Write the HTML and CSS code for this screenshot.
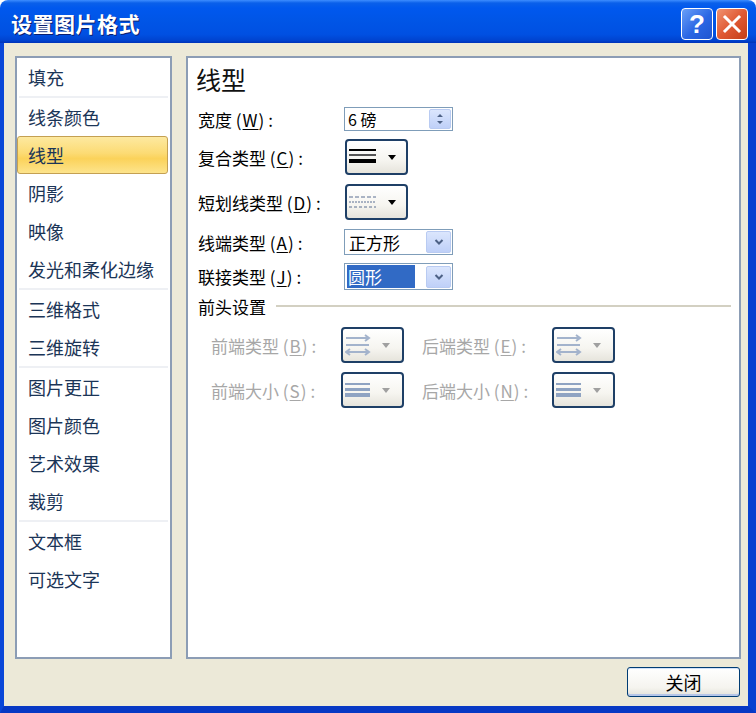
FILE: index.html
```html
<!DOCTYPE html>
<html>
<head>
  <meta charset="utf-8">
  <link rel="stylesheet" href="styles.css">
</head>
<body>
  <div class="window">
    <div class="titlebar">
      <span class="title">设置图片格式</span>
      <div class="caption-buttons">
        <span class="cap-btn cap-help">?</span>
        <span class="cap-btn cap-close">
          <svg width="20" height="20" viewBox="0 0 20 20">
            <path d="M3 3 L17 17 M17 3 L3 17" stroke="#fff" stroke-width="3" stroke-linecap="square"/>
          </svg>
        </span>
      </div>
    </div>

    <div class="frame">
      <div class="panels">
        <ul class="nav">
          <li class="nav-item">填充</li>
          <li class="nav-sep"></li>
          <li class="nav-item">线条颜色</li>
          <li class="nav-item selected">线型</li>
          <li class="nav-item">阴影</li>
          <li class="nav-item">映像</li>
          <li class="nav-item">发光和柔化边缘</li>
          <li class="nav-sep"></li>
          <li class="nav-item">三维格式</li>
          <li class="nav-item">三维旋转</li>
          <li class="nav-sep"></li>
          <li class="nav-item">图片更正</li>
          <li class="nav-item">图片颜色</li>
          <li class="nav-item">艺术效果</li>
          <li class="nav-item">裁剪</li>
          <li class="nav-sep"></li>
          <li class="nav-item">文本框</li>
          <li class="nav-item">可选文字</li>
        </ul>

        <div class="pane">
          <div class="pane-title">线型</div>

          <div class="row row-width">
            <span class="label">宽度 <span class="key">(<u>W</u>)</span>:</span>
            <div class="spinner">
              <span class="spinner-value">6 磅</span>
              <span class="spin-btn">
                <svg width="10" height="14" viewBox="0 0 10 14">
                  <path d="M2 5 L5 2 L8 5 Z M2 9 L5 12 L8 9 Z" fill="#4d6185"/>
                </svg>
              </span>
            </div>
          </div>

          <div class="row row-tall">
            <span class="label">复合类型 <span class="key">(<u>C</u>)</span>:</span>
            <span class="drop-btn">
              <svg width="28" height="18" viewBox="0 0 28 18">
                <rect x="0" y="1" width="27" height="2" fill="#000"/>
                <rect x="0" y="6" width="27" height="2" fill="#555"/>
                <rect x="0" y="11" width="27" height="4" fill="#000"/>
              </svg>
              <span class="tri"></span>
            </span>
          </div>

          <div class="row row-tall">
            <span class="label">短划线类型 <span class="key">(<u>D</u>)</span>:</span>
            <span class="drop-btn">
              <svg width="28" height="18" viewBox="0 0 28 18">
                <path d="M0 4 H27" stroke="#5a6f92" stroke-width="1" stroke-dasharray="4 2"/>
                <path d="M0 9 H27" stroke="#5a6f92" stroke-width="1" stroke-dasharray="2 1"/>
                <path d="M0 14 H27" stroke="#5a6f92" stroke-width="1" stroke-dasharray="3 2"/>
              </svg>
              <span class="tri"></span>
            </span>
          </div>

          <div class="row row-combo">
            <span class="label">线端类型 <span class="key">(<u>A</u>)</span>:</span>
            <div class="combo">
              <span class="combo-value">正方形</span>
              <span class="combo-btn">
                <svg width="10" height="8" viewBox="0 0 10 8">
                  <path d="M1.5 2 L5 5.5 L8.5 2" stroke="#4d6185" stroke-width="2" fill="none"/>
                </svg>
              </span>
            </div>
          </div>

          <div class="row row-combo row-join">
            <span class="label">联接类型 <span class="key">(<u>J</u>)</span>:</span>
            <div class="combo">
              <span class="combo-value selected-text">圆形</span>
              <span class="combo-btn">
                <svg width="10" height="8" viewBox="0 0 10 8">
                  <path d="M1.5 2 L5 5.5 L8.5 2" stroke="#4d6185" stroke-width="2" fill="none"/>
                </svg>
              </span>
            </div>
          </div>

          <div class="group-head">
            <span class="group-title">前头设置</span>
            <span class="group-line"></span>
          </div>

          <div class="row row-tall row-arrow first">
            <span class="label label-off">前端类型 <span class="key">(<u>B</u>)</span>:</span>
            <span class="drop-btn disabled">
              <svg width="26" height="24" viewBox="0 0 26 24">
                <path d="M1 5 H24 M20 2 L24 5 L20 8" stroke="#a3b3cc" stroke-width="2" fill="none"/>
                <path d="M1 12 H24" stroke="#a3b3cc" stroke-width="2"/>
                <path d="M1 19 H24 M5 16 L1 19 L5 22 M20 16 L24 19 L20 22" stroke="#a3b3cc" stroke-width="2" fill="none"/>
              </svg>
              <span class="tri"></span>
            </span>
            <span class="label label-off label-second">后端类型 <span class="key">(<u>E</u>)</span>:</span>
            <span class="drop-btn disabled">
              <svg width="26" height="24" viewBox="0 0 26 24">
                <path d="M1 5 H24 M20 2 L24 5 L20 8" stroke="#a3b3cc" stroke-width="2" fill="none"/>
                <path d="M1 12 H24" stroke="#a3b3cc" stroke-width="2"/>
                <path d="M1 19 H24 M5 16 L1 19 L5 22 M20 16 L24 19 L20 22" stroke="#a3b3cc" stroke-width="2" fill="none"/>
              </svg>
              <span class="tri"></span>
            </span>
          </div>

          <div class="row row-tall row-arrow">
            <span class="label label-off">前端大小 <span class="key">(<u>S</u>)</span>:</span>
            <span class="drop-btn disabled">
              <svg width="26" height="16" viewBox="0 0 26 16">
                <rect x="0" y="1" width="25" height="2" fill="#8fa3c2"/>
                <rect x="0" y="6" width="25" height="3" fill="#8fa3c2"/>
                <rect x="0" y="11" width="25" height="4" fill="#8fa3c2"/>
              </svg>
              <span class="tri"></span>
            </span>
            <span class="label label-off label-second">后端大小 <span class="key">(<u>N</u>)</span>:</span>
            <span class="drop-btn disabled">
              <svg width="26" height="16" viewBox="0 0 26 16">
                <rect x="0" y="1" width="25" height="2" fill="#8fa3c2"/>
                <rect x="0" y="6" width="25" height="3" fill="#8fa3c2"/>
                <rect x="0" y="11" width="25" height="4" fill="#8fa3c2"/>
              </svg>
              <span class="tri"></span>
            </span>
          </div>
        </div>
      </div>

      <div class="footer">
        <button class="btn-close">关闭</button>
      </div>
    </div>
  </div>
</body>
</html>
```

FILE: styles.css
```css
body {
  margin: 0;
  background: #ffffff;
  font-family: "Noto Sans CJK SC", "DejaVu Sans", sans-serif;
}

.window {
  width: 756px;
  height: 713px;
  display: flex;
  flex-direction: column;
}

/* title bar */
.titlebar {
  height: 43px;
  box-sizing: border-box;
  display: flex;
  align-items: center;
  justify-content: space-between;
  padding: 0 8px 0 11px;
  border-radius: 8px 8px 0 0;
  background: linear-gradient(#3d8dff 0, #0a60ea 3px, #0058ee 8px, #0055e6 50%, #0050e2 80%, #0043cf 94%, #0033b8 100%);
}

.title {
  color: #ffffff;
  font-size: 21px;
  font-weight: bold;
  letter-spacing: 0.5px;
  text-shadow: 1px 1px 0 #0a1f70;
  margin-top: 2px;
}

.caption-buttons {
  display: flex;
  gap: 3px;
  margin-top: 5px;
}

.cap-btn {
  width: 32px;
  height: 32px;
  box-sizing: border-box;
  border: 1px solid #ffffff;
  border-radius: 4px;
  display: flex;
  align-items: center;
  justify-content: center;
  color: #ffffff;
}

.cap-help {
  background: linear-gradient(135deg, #6aa0f8, #2a66e4 55%, #1f55d0);
  font-family: "Liberation Sans", sans-serif;
  font-size: 26px;
  font-weight: bold;
}

.cap-close {
  background: linear-gradient(135deg, #f09270, #e05a34 50%, #c33e17);
}

/* frame */
.frame {
  flex: 1;
  display: flex;
  flex-direction: column;
  background: #ece9d8;
  border-left: 4px solid #0a47d8;
  border-right: 8px solid #0840d0;
  border-bottom: 7px solid #0738c4;
}

.panels {
  display: flex;
  gap: 14px;
  padding: 13px 7px 0 11px;
}

.nav {
  list-style: none;
  margin: 0;
  padding: 0;
  width: 157px;
  height: 603px;
  box-sizing: border-box;
  border: 2px solid #8c9db5;
  background: #ffffff;
}

.nav-item {
  height: 38px;
  box-sizing: border-box;
  display: flex;
  align-items: center;
  padding-left: 11px;
  font-size: 18px;
  color: #1b3557;
  white-space: nowrap;
}

.nav-item.selected {
  margin-right: 2px;
  padding-left: 10px;
  border: 1px solid #c4a052;
  border-radius: 3px;
  background: linear-gradient(#fde9a0, #fcdb74 45%, #fbd25a 60%, #fde48c);
}

.nav-sep {
  height: 2px;
  background: #eef0f4;
  margin: 0 2px;
}

.pane {
  width: 555px;
  height: 603px;
  box-sizing: border-box;
  border: 2px solid #8c9db5;
  background: #ffffff;
  padding: 8px 8px 0 8px;
}

.pane-title {
  font-size: 25px;
  line-height: 26px;
  color: #111111;
  margin-bottom: 15px;
}

.row {
  display: flex;
  align-items: center;
  font-size: 17px;
  color: #000000;
  padding-left: 2px;
}

.label {
  width: 146px;
  flex: none;
  white-space: nowrap;
}

.key {
  letter-spacing: 1px;
  margin-right: 3px;
}

.label u {
  text-decoration-thickness: 1px;
  text-underline-offset: 2px;
}

.row-width {
  height: 24px;
  margin-bottom: 8px;
}

.row-tall {
  height: 36px;
  margin-bottom: 9px;
}

.row-combo {
  height: 26px;
  margin-bottom: 8px;
}

.row-join {
  height: 27px;
  margin-bottom: 6px;
}

/* spinner */
.spinner {
  width: 109px;
  height: 24px;
  box-sizing: border-box;
  border: 1px solid #7f9db9;
  display: flex;
  align-items: center;
  justify-content: space-between;
  padding: 0 1px 0 3px;
  font-size: 16px;
}

.spin-btn {
  width: 22px;
  height: 20px;
  box-sizing: border-box;
  border: 1px solid #b9cbf2;
  border-radius: 2px;
  background: linear-gradient(#dbe6fd, #bfd0f8);
  display: flex;
  align-items: center;
  justify-content: center;
}

/* dropdown buttons */
.drop-btn {
  width: 63px;
  height: 36px;
  box-sizing: border-box;
  margin-left: 1px;
  border: 2px solid #1e3f66;
  border-radius: 4px;
  background: linear-gradient(#ffffff, #f6f5f0 60%, #e6e4dc);
  display: flex;
  align-items: center;
  padding-left: 2px;
  gap: 11px;
}

.tri {
  width: 0;
  height: 0;
  border-left: 4px solid transparent;
  border-right: 4px solid transparent;
  border-top: 5px solid #000000;
}

.drop-btn.disabled .tri {
  border-top-color: #a0a0a0;
}

/* combo boxes */
.combo {
  width: 109px;
  height: 100%;
  box-sizing: border-box;
  border: 1px solid #7f9db9;
  display: flex;
  align-items: center;
  justify-content: space-between;
  padding: 1px 1px 1px 2px;
  font-size: 17px;
}

.combo-value {
  padding-left: 2px;
}

.selected-text {
  flex: 0 0 68px;
  height: 100%;
  box-sizing: border-box;
  padding-left: 1px;
  display: flex;
  align-items: center;
  background: #316ac5;
  color: #ffffff;
}

.combo-btn {
  width: 25px;
  height: 22px;
  box-sizing: border-box;
  border: 1px solid #b9cbf2;
  border-radius: 2px;
  background: linear-gradient(#dbe6fd, #bfd0f8);
  display: flex;
  align-items: center;
  justify-content: center;
}

/* arrow settings */
.group-head {
  display: flex;
  align-items: center;
  gap: 10px;
  height: 20px;
  margin-bottom: 11px;
  padding-left: 2px;
}

.group-title {
  font-size: 17px;
  color: #000000;
  white-space: nowrap;
}

.group-line {
  flex: 1;
  height: 2px;
  background: #d3d0c2;
}

.row-arrow {
  padding-left: 15px;
}

.row-arrow .label {
  width: 130px;
}

.row-arrow .drop-btn {
  margin-left: 0;
}

.row-arrow .label-second {
  margin-left: 18px;
}

.label-off {
  color: #a7a7a7;
}

/* footer */
.footer {
  display: flex;
  justify-content: flex-end;
  padding: 8px 8px 0 0;
}

.btn-close {
  width: 113px;
  height: 30px;
  border: 1px solid #003c74;
  border-radius: 3px;
  background: linear-gradient(#ffffff, #f5f4ef 70%, #e3e2da);
  box-shadow: inset 0 -2px 0 #b6c6e8, inset 0 1px 0 #cfe0fa;
  font-family: "Noto Sans CJK SC", sans-serif;
  font-size: 18px;
  color: #000000;
  padding: 0;
  line-height: 26px;
}
```
